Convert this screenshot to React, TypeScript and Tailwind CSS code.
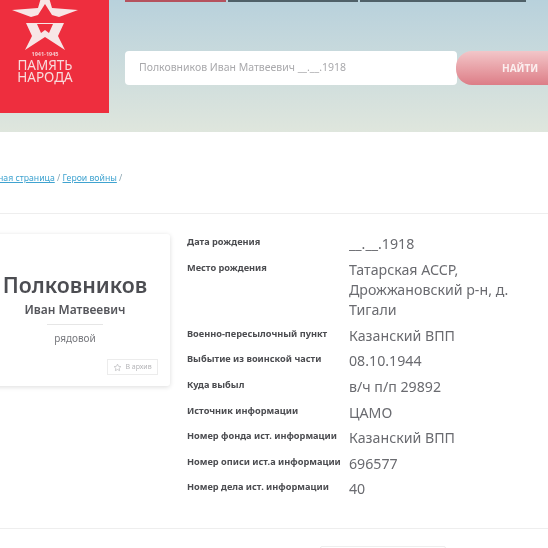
const rows: { label: string; value: string[]; h: string }[] = [
  { label: "Дата рождения", value: ["__.__.1918"], h: "h-[26px]" },
  { label: "Место рождения", value: ["Татарская АССР,", "Дрожжановский р-н, д.", "Тигали"], h: "h-[66px]" },
  { label: "Военно-пересылочный пункт", value: ["Казанский ВПП"], h: "h-[25px]" },
  { label: "Выбытие из воинской части", value: ["08.10.1944"], h: "h-[26px]" },
  { label: "Куда выбыл", value: ["в/ч п/п 29892"], h: "h-[26px]" },
  { label: "Источник информации", value: ["ЦАМО"], h: "h-[25px]" },
  { label: "Номер фонда ист. информации", value: ["Казанский ВПП"], h: "h-[26px]" },
  { label: "Номер описи ист.а информации", value: ["696577"], h: "h-[25px]" },
  { label: "Номер дела ист. информации", value: ["40"], h: "h-[26px]" },
];

function Logo() {
  return (
    <div className="w-[109px] h-[113px] bg-[#ee2e3e] shrink-0 flex flex-col items-center overflow-hidden pr-[19px]">
      <svg width="90" height="51" viewBox="0 0 90 51" className="shrink-0">
        <path fill="#f7e6e6" d="M45 -16 L52 8 L78 10 L59 17 L52 15 L45 4 L38 15 L31 17 L12 10 L38 8 Z" />
        <path
          fill="#f7e6e6"
          fillRule="evenodd"
          d="M26 23 L64 23 L58 36 L65 50 L45 37 L25 50 L32 36 Z M37 24 L41 33 L45 30 L49 33 L53 24 Z"
        />
      </svg>
      <div className="text-[#f5c9cc] text-[5.5px] leading-[6px] font-bold">1941-1945</div>
      <div className="text-[#f8dcdc] text-[13.5px] leading-[12px] mt-[2px] text-center">
        ПАМЯТЬ
        <br />
        НАРОДА
      </div>
    </div>
  );
}

export default function App() {
  return (
    <div className="w-[548px] h-[548px] overflow-hidden bg-white font-['Noto_Sans',sans-serif] blur-[0.5px]">
      <header className="h-[132px] bg-gradient-to-b from-[#b8d1dc] to-[#dfe6dd] flex">
        <Logo />
        <div className="flex-1 pl-4 flex flex-col">
          <nav className="flex gap-[2px] h-[2px]">
            <div className="w-[101px] bg-[#b5525e]" />
            <div className="w-[130px] bg-[#4f6068]" />
            <div className="w-[166px] bg-[#4f6068]" />
          </nav>
          <div className="flex mt-[49px] h-[34px]">
            <div className="w-[332px] bg-white rounded-[4px] flex items-center pl-[14px] text-[10.5px] text-[#a9a9ac]">
              Полковников Иван Матвеевич __.__.1918
            </div>
            <button className="w-[100px] -ml-px bg-gradient-to-b from-[#f2c6c9] to-[#dc7d87] rounded-l-[16px] text-[#fbeeee] text-[10px] font-bold text-left pl-[46px]">
              НАЙТИ
            </button>
          </div>
        </div>
      </header>

      <div className="h-[82px] pt-[40px] -ml-[21px] text-[8.7px] leading-[12px] text-[#8aa4b0] border-b border-[#eeeeee] box-border">
        <span className="text-[#3fa3d0] underline">Главная страница</span> /{" "}
        <span className="text-[#3fa3d0] underline">Герои войны</span> /
      </div>

      <main className="flex h-[315px] border-b border-[#eeeeee] box-border">
        <section className="w-[190px] h-[152px] -ml-[20px] mt-[20px] shrink-0 bg-white rounded-[3px] shadow-[0_1px_5px_rgba(0,0,0,0.14)] flex flex-col items-center pt-[36px]">
          <h1 className="text-[21.3px] leading-[30px] font-semibold text-[#4c4d52]">Полковников</h1>
          <div className="text-[12px] leading-[16px] mt-[2px] font-semibold text-[#55565b]">Иван Матвеевич</div>
          <div className="w-[56px] h-px bg-[#e6e6e6] mt-[6px]" />
          <div className="text-[10px] leading-[14px] mt-[6px] text-[#77787d]">рядовой</div>
          <div className="self-end mr-[12px] mt-[14px] w-[51px] h-[16px] border border-[#ececec] flex items-center justify-center gap-[3px] text-[7px] text-[#b5b5b8]">
            <svg width="9" height="9" viewBox="0 0 24 24" fill="none" stroke="#bdbdc0" strokeWidth="2">
              <path d="M12 3l2.8 5.8 6.2.9-4.5 4.4 1.1 6.3L12 17.4l-5.6 3 1.1-6.3L3 9.7l6.2-.9z" />
            </svg>
            В архив
          </div>
        </section>

        <section className="ml-[17px] pt-[20px] w-[361px] shrink-0">
          {rows.map((r) => (
            <div key={r.label} className={`grid grid-cols-[162px_1fr] ${r.h}`}>
              <div className="text-[9.2px] leading-[14px] pt-px font-bold text-[#4b4c50] whitespace-nowrap">{r.label}</div>
              <div className="text-[14.2px] leading-[20px] text-[#6a6b70]">
                {r.value.map((l) => (
                  <div key={l} className="whitespace-nowrap">{l}</div>
                ))}
              </div>
            </div>
          ))}
        </section>
      </main>

      <div className="flex pt-[17px] pl-[320px]">
        <div className="w-[126px] h-[10px] border border-[#eeeeee] rounded-[2px]" />
      </div>
    </div>
  );
}
